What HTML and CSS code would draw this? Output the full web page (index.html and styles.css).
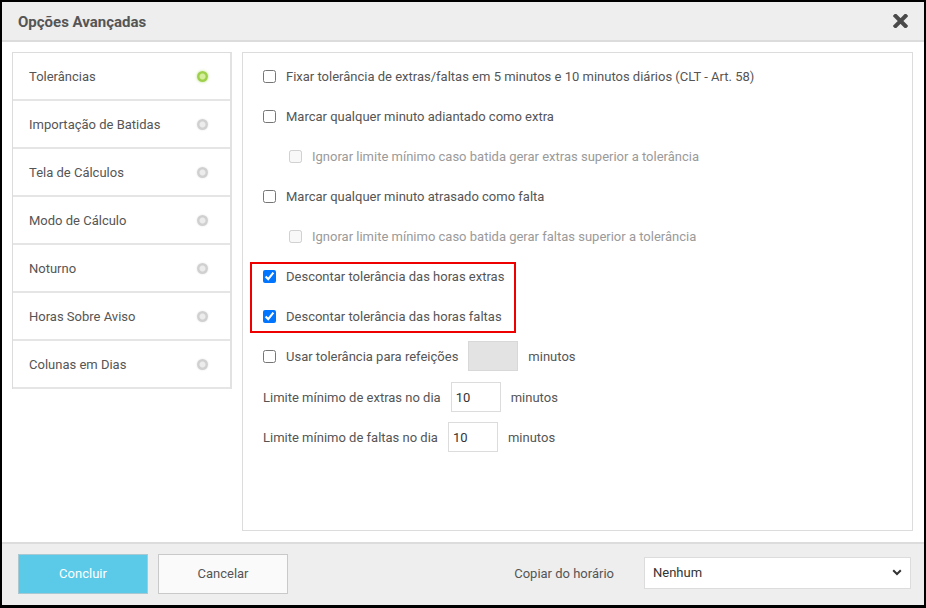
FILE: index.html
```html
<!DOCTYPE html>
<html lang="pt">
<head>
<meta charset="utf-8">
<title>Opções Avançadas</title>
<link rel="stylesheet" href="styles.css">
</head>
<body>
<div class="dialog">
  <div class="header">
    <h1 class="title">Opções Avançadas</h1>
    <svg class="close" width="15" height="14" viewBox="0 0 15 14"><path d="M2.5 2 L12.5 12 M12.5 2 L2.5 12" stroke="#4a4a4a" stroke-width="4" stroke-linecap="square"/></svg>
  </div>
  <div class="content">
    <ul class="sidebar">
      <li class="item"><span>Tolerâncias</span><i class="dot active"></i></li>
      <li class="item"><span>Importação de Batidas</span><i class="dot"></i></li>
      <li class="item"><span>Tela de Cálculos</span><i class="dot"></i></li>
      <li class="item"><span>Modo de Cálculo</span><i class="dot"></i></li>
      <li class="item"><span>Noturno</span><i class="dot"></i></li>
      <li class="item"><span>Horas Sobre Aviso</span><i class="dot"></i></li>
      <li class="item"><span>Colunas em Dias</span><i class="dot"></i></li>
    </ul>
    <div class="panel">
      <label class="row"><input type="checkbox"><span>Fixar tolerância de extras/faltas em 5 minutos e 10 minutos diários (CLT - Art. 58)</span></label>
      <label class="row"><input type="checkbox"><span>Marcar qualquer minuto adiantado como extra</span></label>
      <label class="row sub disabled"><input type="checkbox" disabled><span>Ignorar limite mínimo caso batida gerar extras superior a tolerância</span></label>
      <label class="row"><input type="checkbox"><span>Marcar qualquer minuto atrasado como falta</span></label>
      <label class="row sub disabled"><input type="checkbox" disabled><span>Ignorar limite mínimo caso batida gerar faltas superior a tolerância</span></label>
      <div class="highlight">
        <label class="hrow"><input type="checkbox" checked><span>Descontar tolerância das horas extras</span></label>
        <label class="hrow"><input type="checkbox" checked><span>Descontar tolerância das horas faltas</span></label>
      </div>
      <div class="row row-meal">
        <input type="checkbox"><span>Usar tolerância para refeições</span>
        <input type="text" class="num num-disabled" disabled>
        <span>minutos</span>
      </div>
      <div class="row">
        <span>Limite mínimo de extras no dia</span>
        <input type="text" class="num" value="10">
        <span>minutos</span>
      </div>
      <div class="row">
        <span>Limite mínimo de faltas no dia</span>
        <input type="text" class="num" value="10">
        <span>minutos</span>
      </div>
    </div>
  </div>
  <div class="footer">
    <button class="btn btn-primary">Concluir</button>
    <button class="btn btn-default">Cancelar</button>
    <span class="spacer"></span>
    <span class="copy-label">Copiar do horário</span>
    <div class="select"><span>Nenhum</span>
      <svg width="10" height="7" viewBox="0 0 10 7"><path d="M1.2 1.2 L5 5 L8.8 1.2" fill="none" stroke="#333" stroke-width="2"/></svg>
    </div>
  </div>
</div>
</body>
</html>
```
FILE: styles.css
```css
* { box-sizing: border-box; }
html, body { margin: 0; padding: 0; }
body {
  background: #000;
  font-family: Roboto, "Liberation Sans", sans-serif;
  font-size: 13px;
  color: #555;
  width: 926px;
  height: 608px;
  overflow: hidden;
}
.dialog {
  margin: 2px;
  width: 922px;
  height: 603px;
  background: #fff;
  display: flex;
  flex-direction: column;
}
.header {
  height: 40px;
  flex: none;
  background: #eee;
  border-bottom: 2px solid #dcdcdc;
  display: flex;
  align-items: center;
  justify-content: space-between;
  padding: 1px 16px 0 16px;
}
.title {
  margin: 0;
  font-size: 15px;
  font-weight: 700;
  color: #555;
}
.close { display: block; margin-top: -1px; }
.content {
  flex: 1;
  display: flex;
  gap: 10px;
  padding: 10px 11px 11px 10px;
}
.sidebar {
  list-style: none;
  margin: 0;
  padding: 0;
  width: 220px;
  align-self: flex-start;
  border: 1px solid #dcdcdc;
  border-bottom: none;
  border-right: 2px solid #e2e2e2;
}
.item {
  height: 48px;
  border-bottom: 2px solid #e5e5e5;
  display: flex;
  align-items: center;
  justify-content: space-between;
  padding: 0 22px 0 16px;
  color: #555;
}
.dot {
  width: 11px;
  height: 11px;
  border-radius: 50%;
  background: radial-gradient(circle at 50% 50%, #ececec 0 2.5px, #d0d0d0 3.5px 5.5px);
  box-shadow: 0 0 2px rgba(0,0,0,0.12);
}
.dot.active {
  background: radial-gradient(circle at 50% 50%, #d4ee9e 0 2.5px, #9fd04c 3.5px 5.5px);
  box-shadow: 0 0 3px rgba(140,200,60,0.6);
}
.panel {
  flex: 1;
  border: 1px solid #dcdcdc;
  padding: 3px 0 0 20px;
}
.row {
  height: 40px;
  display: flex;
  align-items: center;
  white-space: nowrap;
}
.row-meal { height: 41px; padding-bottom: 1px; }
.row input[type=checkbox], .hrow input[type=checkbox] {
  margin: 0 10px 0 0;
  width: 13px;
  height: 13px;
}
.row.sub { padding-left: 26px; }
.row.disabled { color: #9a9a9a; }
.highlight {
  margin: 6px 0 3px -13px;
  width: 266px;
  height: 71px;
  border: 2px solid #ee0000;
  padding: 0 0 0 11px;
  display: flex;
  flex-direction: column;
  gap: 16px;
}
.hrow {
  height: 24px;
  display: flex;
  align-items: center;
  white-space: nowrap;
}
.num {
  width: 50px;
  height: 30px;
  border: 1px solid #dcdcdc;
  margin: 0 10px;
  padding: 0 0 0 4px;
  font-family: Roboto, "Liberation Sans", sans-serif;
  font-size: 13px;
  color: #333;
  background: #fff;
  outline: none;
}
.num-disabled { background: #e3e3e3; border-color: #d8d8d8; }
.footer {
  height: 63px;
  flex: none;
  background: #eee;
  border-top: 2px solid #dcdcdc;
  display: flex;
  align-items: center;
  padding: 0 13px 2px 16px;
}
.btn {
  width: 130px;
  height: 40px;
  font-family: Roboto, "Liberation Sans", sans-serif;
  font-size: 13px;
  cursor: pointer;
}
.btn-primary {
  background: #5bcae8;
  border: 1px solid #a9c9d2;
  color: #fff;
}
.btn-default {
  margin-left: 10px;
  background: #fafafa;
  border: 1px solid #c9c9c9;
  color: #555;
}
.spacer { flex: 1; }
.copy-label { margin-right: 30px; color: #555; }
.select {
  width: 267px;
  height: 32px;
  margin-top: -2px;
  background: #fff;
  border: 1px solid #dcdcdc;
  display: flex;
  align-items: center;
  justify-content: space-between;
  padding: 0 8px 0 8px;
  color: #333;
}
```
